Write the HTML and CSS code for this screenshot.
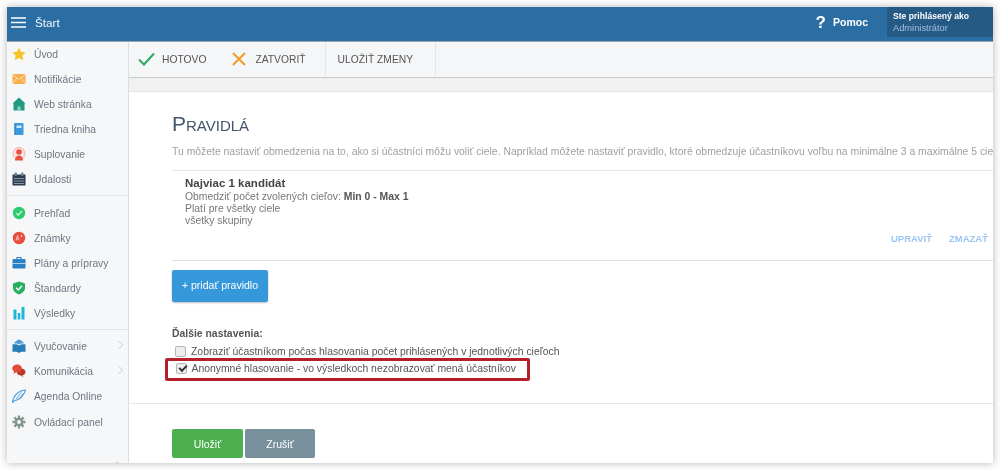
FILE: index.html
```html
<!DOCTYPE html>
<html lang="sk">
<head>
<meta charset="utf-8">
<title>Pravidlá</title>
<link rel="stylesheet" href="styles.css">
</head>
<body>
<div class="window">
  <header class="topbar">
    <svg class="burger" width="15" height="11" viewBox="0 0 15 11"><path d="M0 1h15M0 5.500h15M0 10h15" stroke="#fff" stroke-width="1.300"/></svg>
    <span class="brand">Štart</span>
    <span class="help-mark">?</span>
    <span class="help">Pomoc</span>
    <div class="user"><b>Ste prihlásený ako</b><span>Administrátor</span></div>
  </header>
  <div class="body">
    <nav class="side">
      <div class="group">
        <a class="item"><svg class="ic" viewBox="0 0 14 14"><path d="M7 .500l2 4.300 4.700.6-3.400 3.200.9 4.700L7 11l-4.200 2.300.9-4.700L.3 5.400 5 4.800z" fill="#f5c325"/></svg>Úvod</a>
        <a class="item"><svg class="ic" viewBox="0 0 14 14"><rect x=".5" y="2" width="13" height="10" fill="#f8ad4e"/><path d="M.5 2.500L7 7.500l6.500-5M.5 12l4.500-6M13.500 12L9 6" fill="none" stroke="#fde7c6" stroke-width=".8"/></svg>Notifikácie</a>
        <a class="item"><svg class="ic" viewBox="0 0 14 14"><path d="M7 .5l6.500 6H12.500V13.500h-11V6.500H.5z" fill="#1f9c80"/><path d="M5.500 13.500V9.500h3v4" fill="#8fd0bf"/></svg>Web stránka</a>
        <a class="item"><svg class="ic" viewBox="0 0 14 14"><rect x="2.500" y="1" width="9" height="12" rx="1" fill="#3a9ae0"/><rect x="4.500" y="3.500" width="5" height="2.500" fill="#cfe8fa"/><rect x="2.500" y="1" width="1" height="12" fill="#2a7fc0"/></svg>Triedna kniha</a>
        <a class="item"><svg class="ic" viewBox="0 0 14 14"><circle cx="7" cy="6.500" r="6" fill="#fbe4e0" stroke="#f2a59a" stroke-width=".8"/><circle cx="7" cy="5" r="2.800" fill="#e8503f"/><path d="M3 13.500c0-3.500 1.800-5 4-5s4 1.500 4 5z" fill="#e8503f"/></svg>Suplovanie</a>
        <a class="item"><svg class="ic" viewBox="0 0 14 14"><rect x=".5" y="2.500" width="13" height="11" fill="#2c3e50"/><rect x="2.500" y=".5" width="2.500" height="3.500" rx="1" fill="#6f7f8e"/><rect x="9" y=".5" width="2.500" height="3.500" rx="1" fill="#6f7f8e"/><path d="M2.500 6.500h9M2.500 9h9M2.500 11.500h9" stroke="#e5eaef" stroke-width="1" stroke-dasharray="1 1"/></svg>Udalosti</a>
      </div>
      <div class="group">
        <a class="item"><svg class="ic" viewBox="0 0 14 14"><circle cx="7" cy="7" r="6.200" fill="#2ecc71"/><path d="M4.200 7.200l2 2L10 5" fill="none" stroke="#d9f8e6" stroke-width="1.200"/></svg>Prehľad</a>
        <a class="item"><svg class="ic" viewBox="0 0 14 14"><circle cx="7" cy="7" r="6.200" fill="#e74c3c"/><path d="M4 9.500L5.500 4.500 7 9.500M4.600 8h1.800M8.500 5h2M9.500 4v2" fill="none" stroke="#fbd5d0" stroke-width=".8"/></svg>Známky</a>
        <a class="item"><svg class="ic" viewBox="0 0 14 14"><path d="M5 3V1.500h4V3" fill="none" stroke="#2a7ab8" stroke-width="1.100"/><rect x=".5" y="3" width="13" height="9.500" rx="1" fill="#2a82c4"/><path d="M.5 7.500h13" stroke="#cfe4f3" stroke-width=".8"/></svg>Plány a prípravy</a>
        <a class="item"><svg class="ic" viewBox="0 0 14 14"><path d="M7 .5l6 2v4.500c0 3.200-3 5.500-6 6.500-3-1-6-3.300-6-6.500V2.500z" fill="#27ae60"/><path d="M4.200 6.800L6.300 9 10 4.800" fill="none" stroke="#fff" stroke-width="1.300"/></svg>Štandardy</a>
        <a class="item"><svg class="ic" viewBox="0 0 14 14"><path d="M1.500 3.500h3v10h-3zM5.800 7h2.500v6.500H5.800zM9.500 1h3v12.500h-3z" fill="#1fb5d6"/></svg>Výsledky</a>
      </div>
      <div class="group last">
        <a class="item"><svg class="ic" viewBox="0 0 14 14"><path d="M.5 5.500c2.800-.4 5 0 6.500 1 1.500-1 3.700-1.400 6.500-1v7.500c-2.800-.4-5 0-6.500 1-1.500-1-3.700-1.400-6.500-1z" fill="#2980b9"/><path d="M2 4.500C3 2.500 5 1 7 .5c2 .5 4 2 5 4-2-.2-4 .2-5 1-1-.8-3-1.200-5-1z" fill="#4f9fd6"/></svg>Vyučovanie<span class="chev"></span></a>
        <a class="item"><svg class="ic" viewBox="0 0 14 14"><path d="M13.500 8c0 2-1.400 3.200-3.300 3.300l1.300 2-3.300-2C6 11.300 5 10 5 8s2-3.500 4.200-3.500S13.500 6 13.500 8z" fill="#b93a2b"/><path d="M10 4.500c0 2.200-2 3.900-4.500 3.900-.5 0-1 0-1.400-.2L1.500 10l.6-2.700C1 6.500.2 5.600.2 4.500.2 2.300 2.600.5 5.200.5S10 2.300 10 4.500z" fill="#e04b3a"/></svg>Komunikácia<span class="chev"></span></a>
        <a class="item"><svg class="ic" viewBox="0 0 14 14"><path d="M.5 13.500C1 9 3.500 4 10 1.500c1.200-.4 2.700-.6 3.500-.5-.2 1-.6 2-1.500 3.500C9.500 9 6 11.500 2.500 11.500z" fill="none" stroke="#4a9de0" stroke-width="1.100"/><path d="M4 10L9.500 3.500M6.500 10.500L11 5" stroke="#4a9de0" stroke-width=".9"/></svg>Agenda Online</a>
        <a class="item settings"><svg class="ic" viewBox="0 0 14 14"><path d="M7 .5v13M.5 7h13M2.400 2.400l9.200 9.200M11.600 2.400l-9.200 9.200" stroke="#84968b" stroke-width="2.300"/><circle cx="7" cy="7" r="4.300" fill="#84968b"/><circle cx="7" cy="7" r="1.900" fill="#f5f7f9"/></svg>Ovládací panel</a>
        <span class="more-caret"></span>
      </div>
    </nav>
    <div class="main">
      <div class="toolbar">
        <a class="tool ok"><svg width="17" height="14" viewBox="0 0 17 14"><path d="M1 7.500l5 5L16 1.500" fill="none" stroke="#2eaa62" stroke-width="2"/></svg>HOTOVO</a>
        <a class="tool close"><svg width="14" height="14" viewBox="0 0 14 14"><path d="M1 1l12 12M13 1L1 13" fill="none" stroke="#f39c26" stroke-width="2"/></svg>ZATVORIŤ</a>
        <a class="tool sep">ULOŽIŤ ZMENY</a>
      </div>
      <div class="strip"></div>
      <main class="content">
        <section class="block">
          <h1 class="title">Pravidlá</h1>
          <p class="intro">Tu môžete nastaviť obmedzenia na to, ako si účastníci môžu voliť ciele. Napríklad môžete nastaviť pravidlo, ktoré obmedzuje účastníkovu voľbu na minimálne 3 a maximálne 5 cieľov.</p>
          <div class="rule">
            <div class="rule-name">Najviac 1 kandidát</div>
            <div>Obmedziť počet zvolených cieľov: <b>Min 0 - Max 1</b></div>
            <div>Platí pre všetky ciele</div>
            <div>všetky skupiny</div>
            <div class="rule-actions"><a>UPRAVIŤ</a><a>ZMAZAŤ</a></div>
          </div>
          <button class="btn add">+ pridať pravidlo</button>
          <div class="more-title">Ďalšie nastavenia:</div>
          <label class="opt"><input type="checkbox">Zobraziť účastníkom počas hlasovania počet prihlásených v jednotlivých cieľoch</label>
          <label class="opt marked"><input type="checkbox" checked>Anonymné hlasovanie - vo výsledkoch nezobrazovať mená účastníkov</label>
        </section>
        <div class="actions">
          <button class="btn save">Uložiť</button>
          <button class="btn cancel">Zrušiť</button>
        </div>
      </main>
    </div>
  </div>
</div>
</body>
</html>
```

FILE: styles.css
```css
* { box-sizing: border-box; }
html, body { margin: 0; height: 470px; overflow: hidden; background: #fff; }
body { padding: 7px; font-family: "Liberation Sans", Arial, sans-serif; color: #555; }
.window { width: 986px; height: 456px; overflow: hidden; display: flex; flex-direction: column; background: #fff; box-shadow: 0 0 8px rgba(0,0,0,.3); filter: blur(.3px); }
.topbar { flex: none; height: 35px; background: #2a6ea3; border-bottom: 1px solid #9aa5ad; display: flex; align-items: center; color: #fff; padding: 0 0 4px 4px; }
.burger { margin-right: 9px; }
.brand { font-size: 11.700px; color: #f2f6fa; }
.help-mark { margin-left: auto; font-size: 17px; font-weight: bold; margin: 1px 7px 0 auto; }
.help { font-size: 10.500px; font-weight: bold; margin-right: 19px; }
.user { width: 106px; height: 30px; align-self: flex-start; background: #255a85; padding: 3px 0 0 6px; font-size: 8.600px; line-height: 12px; display: flex; flex-direction: column; }
.user span { color: #a0c0dc; font-size: 9.300px; }
.body { flex: 1; display: flex; min-height: 0; }
.side { flex: none; width: 122px; background: #f5f7f9; border-right: 1px solid #dcdfe2; font-size: 10.300px; color: #6d7680; }
.group { border-bottom: 1px solid #dfe2e5; padding-bottom: 3px; }
.group + .group { padding-top: 5px; }
.group.last { border-bottom: 0; padding-top: 4px; }
.item { height: 25px; display: flex; align-items: center; padding: 0 0 1px 5px; position: relative; }
.settings { margin-top: 1px; }
.ic { width: 14px; height: 14px; margin-right: 8px; flex: none; }
.chev { position: absolute; right: 6px; top: 8px; width: 6px; height: 6px; border-top: 1px solid #d5d8db; border-right: 1px solid #d5d8db; transform: rotate(45deg); }
.more-caret { display: block; margin: 28px 0 0 108px; width: 4px; height: 4px; border-top: 1px solid #888; border-left: 1px solid #888; transform: rotate(45deg); }
.main { flex: 1; min-width: 0; display: flex; flex-direction: column; }
.toolbar { flex: none; height: 36px; background: #f5f6f8; border-bottom: 1px solid #c9cccf; display: flex; align-items: stretch; padding-left: 9px; }
.tool { display: flex; align-items: center; font-size: 10.300px; color: #555; padding-bottom: 1px; }
.ok { gap: 7px; padding-right: 26px; }
.close { gap: 9px; padding-right: 19px; }
.tool.sep { border-left: 1px solid #e4e6e8; border-right: 1px solid #e4e6e8; padding: 0 22px 1px 12px; }
.strip { flex: none; height: 14px; background: #f1f1f1; border-bottom: 1px solid #e3e3e3; }
.content { flex: 1; min-height: 0; overflow: hidden; background: #fff; }
.block { padding: 19px 0 0 43px; border-bottom: 1px solid #e6e6e6; height: 312px; }
.title { margin: 0; font-size: 21px; font-weight: normal; font-variant: small-caps; line-height: 26px; color: #44546a; }
.intro { margin: 8px 0 0; font-size: 10.400px; line-height: 14px; color: #a0a0a0; white-space: nowrap; padding-bottom: 11px; border-bottom: 1px solid #e6e6e6; }
.rule { height: 90px; padding: 5px 5px 0 13px; border-bottom: 1px solid #e0e0e0; font-size: 10.400px; line-height: 12px; color: #777; position: relative; }
.rule b { color: #555; }
.rule-name { font-size: 11.500px; line-height: 15px; font-weight: bold; color: #444; }
.rule-actions { position: absolute; right: 5px; top: 62px; display: flex; gap: 17px; font-size: 9.500px; font-weight: bold; color: #9cc7f2; }
.btn { border: 0; border-radius: 2px; color: #fff; font: 10.500px "Liberation Sans", Arial, sans-serif; display: block; }
.add { width: 96px; height: 32px; margin-top: 9px; padding-bottom: 3px; background: #3498db; box-shadow: 0 1px 2px rgba(0,0,0,.25); }
.more-title { margin-top: 26px; font-size: 10.400px; font-weight: bold; color: #555; line-height: 12px; }
.opt { display: flex; align-items: center; font-size: 10.400px; color: #555; height: 16px; }
.opt input { appearance: none; margin: 0 5px 0 3px; width: 11px; height: 11px; border: 1px solid #b5b5b5; border-radius: 2px; background: #ededed; position: relative; flex: none; }
.opt input:checked::after { content: ""; position: absolute; left: 2px; top: 1px; width: 6px; height: 3px; border-left: 2px solid #333; border-bottom: 2px solid #333; transform: rotate(-45deg); }
.opt:first-of-type { margin-top: 3px; }
.marked { width: 365px; height: 23px; border: 3px solid #b51f2b; border-radius: 2px; margin: -1px 0 0 -7px; padding: 0 0 3px 4.500px; }
.actions { padding: 25px 0 0 43px; display: flex; gap: 2px; }
.save { width: 71px; height: 29px; background: #4caf50; }
.cancel { width: 70px; height: 29px; background: #78909c; }
```
